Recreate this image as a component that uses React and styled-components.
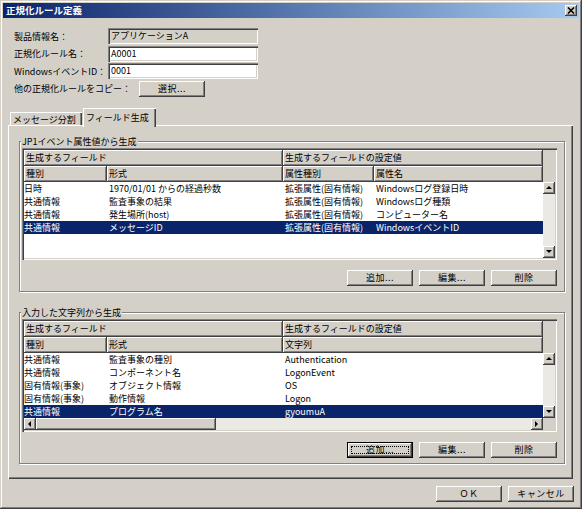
import React from 'react';
import styled, { createGlobalStyle, css } from 'styled-components';

const GlobalStyle = createGlobalStyle`
  html, body {
    margin: 0;
    padding: 0;
    background: #ffffff;
  }
  body {
    font-family: "Noto Sans CJK JP", "Noto Sans", sans-serif;
    font-size: 9px;
    color: #000;
  }
  * {
    box-sizing: border-box;
  }
`;

const raised = css`
  box-shadow: inset -1px -1px #404040, inset 1px 1px #ffffff,
    inset -2px -2px #808080, inset 2px 2px #d4d0c8;
`;

const sunken = css`
  box-shadow: inset 1px 1px #808080, inset 2px 2px #404040,
    inset -1px -1px #ffffff, inset -2px -2px #d4d0c8;
`;

const table1 = {
    cols: '83px 176px 91px 169px',
    groups: [
        { label: '生成するフィールド', span: 2 },
        { label: '生成するフィールドの設定値', span: 2 },
    ],
    heads: ['種別', '形式', '属性種別', '属性名'],
    rows: [
        ['日時', '1970/01/01 からの経過秒数', '拡張属性(固有情報)', 'Windowsログ登録日時'],
        ['共通情報', '監査事象の結果', '拡張属性(固有情報)', 'Windowsログ種類'],
        ['共通情報', '発生場所(host)', '拡張属性(固有情報)', 'コンピューター名'],
        ['共通情報', 'メッセージID', '拡張属性(固有情報)', 'WindowsイベントID'],
    ],
    selected: 3,
};

const table2 = {
    cols: '83px 176px 260px',
    groups: [
        { label: '生成するフィールド', span: 2 },
        { label: '生成するフィールドの設定値', span: 1 },
    ],
    heads: ['種別', '形式', '文字列'],
    rows: [
        ['共通情報', '監査事象の種別', 'Authentication'],
        ['共通情報', 'コンポーネント名', 'LogonEvent'],
        ['固有情報(事象)', 'オブジェクト情報', 'OS'],
        ['固有情報(事象)', '動作情報', 'Logon'],
        ['共通情報', 'プログラム名', 'gyoumuA'],
    ],
    selected: 4,
};

const Arrow = ({ dir }) => {
    const points = {
        up: '1,5 4,2 7,5',
        down: '1,2 4,5 7,2',
        left: '5,1 2,4 5,7',
        right: '2,1 5,4 2,7',
    }[dir];
    return (
        <svg width="8" height="8" viewBox="0 0 8 8">
            <polygon points={points} fill="#000" />
        </svg>
    );
};

const ListTable = ({ data, hscroll }) => (
    <ListView $hscroll={hscroll}>
        <HeaderArea>
            <HeadRow $cols={data.cols}>
                {data.groups.map((g) => (
                    <HeadCell key={g.label} $span={g.span}>{g.label}</HeadCell>
                ))}
            </HeadRow>
            <HeadRow $cols={data.cols}>
                {data.heads.map((h) => (
                    <HeadCell key={h}>{h}</HeadCell>
                ))}
            </HeadRow>
        </HeaderArea>
        <HeaderCorner />
        <Rows>
            {data.rows.map((r, i) => (
                <Row key={i} $cols={data.cols} $selected={i === data.selected}>
                    {r.map((c, j) => (
                        <Cell key={j} $first={j === 0}>{c}</Cell>
                    ))}
                </Row>
            ))}
        </Rows>
        <VScroll>
            <ArrowButton><Arrow dir="up" /></ArrowButton>
            <Track />
            <ArrowButton><Arrow dir="down" /></ArrowButton>
        </VScroll>
        {hscroll && (
            <>
                <HScroll>
                    <ArrowButton><Arrow dir="left" /></ArrowButton>
                    <Thumb />
                    <Track />
                    <ArrowButton><Arrow dir="right" /></ArrowButton>
                </HScroll>
                <ScrollCorner />
            </>
        )}
    </ListView>
);

const App = () => {
    return (
        <>
            <GlobalStyle />
            <Window>
                <TitleBar>
                    <TitleText>正規化ルール定義</TitleText>
                    <CloseButton>
                        <svg width="8" height="7" viewBox="0 0 8 7">
                            <path d="M1 0.5 L7 6.5 M7 0.5 L1 6.5" stroke="#000" strokeWidth="1.6" />
                        </svg>
                    </CloseButton>
                </TitleBar>
                <Body>
                    <Form>
                        <FormRow>
                            <Label>製品情報名：</Label>
                            <TextField $readOnly>アプリケーションA</TextField>
                        </FormRow>
                        <FormRow>
                            <Label>正規化ルール名：</Label>
                            <TextField>A0001</TextField>
                        </FormRow>
                        <FormRow>
                            <Label>WindowsイベントID：</Label>
                            <TextField>0001</TextField>
                        </FormRow>
                        <FormRow>
                            <Label $wide>他の正規化ルールをコピー：</Label>
                            <Button>選択...</Button>
                        </FormRow>
                    </Form>
                    <TabStrip>
                        <Tab $width={72}>メッセージ分割</Tab>
                        <Tab $width={73} $active>フィールド生成</Tab>
                    </TabStrip>
                    <TabPanel>
                        <GroupBox>
                            <Legend>JP1イベント属性値から生成</Legend>
                            <ListTable data={table1} />
                            <ButtonRow $gap={10}>
                                <Button>追加...</Button>
                                <Button>編集...</Button>
                                <Button>削除</Button>
                            </ButtonRow>
                        </GroupBox>
                        <GroupBox $second>
                            <Legend>入力した文字列から生成</Legend>
                            <ListTable data={table2} hscroll />
                            <ButtonRow $gap={10}>
                                <Button $default>追加...</Button>
                                <Button>編集...</Button>
                                <Button>削除</Button>
                            </ButtonRow>
                        </GroupBox>
                    </TabPanel>
                    <Footer>
                        <Button>ＯＫ</Button>
                        <Button>キャンセル</Button>
                    </Footer>
                </Body>
            </Window>
        </>
    );
};

export default App;

const Window = styled.div`
    width: 582px;
    height: 509px;
    padding: 3px;
    background: #d4d0c8;
    display: flex;
    flex-direction: column;
    box-shadow: inset -1px -1px #404040, inset 1px 1px #d4d0c8,
        inset -2px -2px #808080, inset 2px 2px #ffffff;
`;

const TitleBar = styled.div`
    height: 15px;
    display: flex;
    align-items: center;
    justify-content: space-between;
    padding: 0 2px 0 3px;
    background: linear-gradient(to right, #0a246a, #a6caf0);
`;

const TitleText = styled.span`
    color: #ffffff;
    font-weight: bold;
    font-size: 9.5px;
    line-height: 15px;
`;

const CloseButton = styled.div`
    width: 12px;
    height: 11px;
    display: flex;
    align-items: center;
    justify-content: center;
    background: #d4d0c8;
    ${raised}
`;

const Body = styled.div`
    flex: 1;
    display: flex;
    flex-direction: column;
    padding: 0 6px 0 5px;
`;

const Form = styled.div`
    display: flex;
    flex-direction: column;
    gap: 1.6px;
    margin-top: 10px;
    padding-left: 6px;
`;

const FormRow = styled.div`
    display: flex;
    align-items: center;
    height: 16px;
`;

const Label = styled.span`
    width: ${(p) => (p.$wide ? '125px' : '94px')};
    white-space: nowrap;
`;

const TextField = styled.div`
    width: 150px;
    height: 16px;
    line-height: 16px;
    padding-left: 3px;
    background: ${(p) => (p.$readOnly ? '#d4d0c8' : '#ffffff')};
    ${sunken}
`;

const Button = styled.div`
    width: 66px;
    height: 16px;
    display: flex;
    align-items: center;
    justify-content: center;
    background: #d4d0c8;
    letter-spacing: 0.5px;
    ${(p) =>
        p.$default
            ? css`
                  box-shadow: inset 0 0 0 1px #000000, inset -2px -2px #404040,
                      inset 2px 2px #ffffff, inset -3px -3px #808080;
                  outline: 1px dotted #000000;
                  outline-offset: -5px;
              `
            : raised}
`;

const TabStrip = styled.div`
    display: flex;
    align-items: flex-end;
    height: 17px;
    margin-top: 11px;
    padding-left: 2px;
`;

const Tab = styled.div`
    position: relative;
    z-index: 1;
    width: ${(p) => p.$width}px;
    height: ${(p) => (p.$active ? '19px' : '13px')};
    margin-bottom: ${(p) => (p.$active ? '-2px' : '0')};
    margin-left: ${(p) => (p.$active ? '1px' : '0')};
    padding: ${(p) => (p.$active ? '3px 0 0 3px' : '1px 0 0 3px')};
    background: #d4d0c8;
    white-space: nowrap;
    box-shadow: inset 1px 0 #ffffff, inset 0 1px #ffffff, inset -1px 0 #404040,
        inset -2px 0 #808080;
`;

const TabPanel = styled.div`
    height: 354px;
    padding: 11px 8px 0 11px;
    background: #d4d0c8;
    box-shadow: inset 1px 1px #ffffff, inset -1px -1px #404040,
        inset -2px -2px #808080;
`;

const GroupBox = styled.fieldset`
    margin: ${(p) => (p.$second ? '15px 0 0' : '0')};
    padding: 0 7px 5px 2px;
    border: 1px solid #808080;
    box-shadow: 1px 1px 0 #ffffff, inset 1px 1px 0 #ffffff;
    min-width: 0;
`;

const Legend = styled.legend`
    position: relative;
    padding: 0 1px;
    margin-left: -1px;
    line-height: 12px;
    background: #d4d0c8;
`;

const ListView = styled.div`
    display: grid;
    grid-template-columns: 519px 12px;
    grid-template-rows: ${(p) => (p.$hscroll ? '32px 65px 12px' : '32px 76px')};
    padding: 2px;
    background: #ffffff;
    ${sunken}
`;

const HeaderArea = styled.div`
    display: flex;
    flex-direction: column;
    background: #d4d0c8;
`;

const HeaderCorner = styled.div`
    background: #d4d0c8;
`;

const HeadRow = styled.div`
    display: grid;
    grid-template-columns: ${(p) => p.$cols};
    height: 16px;
`;

const HeadCell = styled.div`
    grid-column: span ${(p) => p.$span || 1};
    line-height: 16px;
    padding-left: 2px;
    white-space: nowrap;
    overflow: hidden;
    ${raised}
`;

const Rows = styled.div`
    display: flex;
    flex-direction: column;
    background: #ffffff;
    overflow: hidden;
`;

const Row = styled.div`
    display: grid;
    grid-template-columns: ${(p) => p.$cols};
    height: 13px;
    line-height: 13px;
    flex-shrink: 0;
    background: ${(p) => (p.$selected ? '#0a246a' : 'transparent')};
    color: ${(p) => (p.$selected ? '#ffffff' : '#000000')};
`;

const Cell = styled.div`
    padding-left: ${(p) => (p.$first ? '0' : '2px')};
    white-space: nowrap;
    overflow: hidden;
`;

const VScroll = styled.div`
    display: flex;
    flex-direction: column;
    background: #ebe9e4;
`;

const HScroll = styled.div`
    display: flex;
    background: #ebe9e4;
`;

const Track = styled.div`
    flex: 1;
`;

const ArrowButton = styled.div`
    width: 12px;
    height: 12px;
    flex-shrink: 0;
    display: flex;
    align-items: center;
    justify-content: center;
    background: #d4d0c8;
    ${raised}
`;

const Thumb = styled.div`
    width: 180px;
    height: 12px;
    background: #d4d0c8;
    ${raised}
`;

const ScrollCorner = styled.div`
    background: #d4d0c8;
`;

const ButtonRow = styled.div`
    display: flex;
    justify-content: flex-end;
    gap: 6px;
    margin-top: ${(p) => p.$gap}px;
`;

const Footer = styled.div`
    display: flex;
    justify-content: flex-end;
    gap: 6px;
    margin-top: 7px;
    margin-right: -1px;
`;
